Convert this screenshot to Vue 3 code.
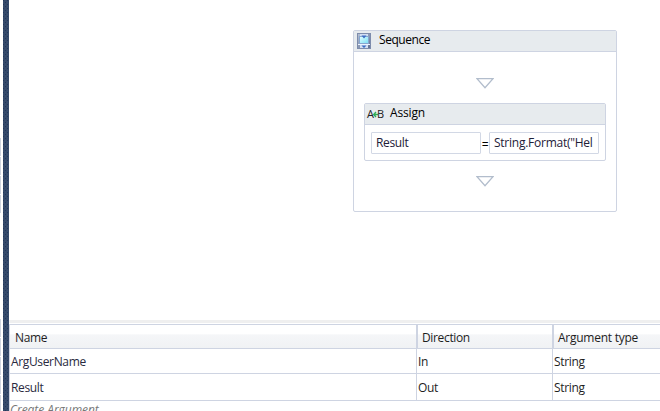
<script setup>
const rows = [
  { name: 'ArgUserName', direction: 'In', type: 'String' },
  { name: 'Result', direction: 'Out', type: 'String' },
]
</script>

<template>
  <div class="designer">
    <aside class="edge">
      <div class="tabs"><i v-for="n in 4" :key="n"></i></div>
      <div class="tabs lower"><i v-for="n in 5" :key="n"></i></div>
    </aside>
    <div class="splitter">
      <svg width="6" height="411">
        <defs>
          <pattern id="dots" width="4" height="4" patternUnits="userSpaceOnUse">
            <rect x="0" y="0" width="1" height="1" fill="#22375a" />
            <rect x="2" y="2" width="1" height="1" fill="#22375a" />
          </pattern>
        </defs>
        <rect width="6" height="411" fill="url(#dots)" />
      </svg>
    </div>
    <main class="main">
      <section class="canvas">
        <div class="sequence">
          <header class="head">
            <svg class="seq-icon" width="14" height="16" viewBox="0 0 14 16">
              <defs>
                <linearGradient id="frame" x2="1" y2="1">
                  <stop offset="0" stop-color="#b9c5d8" />
                  <stop offset="1" stop-color="#5c6b8e" />
                </linearGradient>
                <linearGradient id="pane" x2="1" y2="1">
                  <stop offset="0" stop-color="#e4ffff" />
                  <stop offset="1" stop-color="#78def4" />
                </linearGradient>
              </defs>
              <rect x=".5" y=".5" width="13" height="15" fill="url(#frame)" stroke="#7d8cac" />
              <path d="M3 1h8v14H3z" fill="#d3dff2" />
              <rect x="2.5" y="3.5" width="9" height="7" fill="url(#pane)" stroke="#86a6cf" />
              <path d="M4.500 2.500h5L7 5.500zM4.500 12.500h5l-2.500 2.500z" fill="#3a6cc4" />
              <path d="M1 11.500h12" stroke="#edf4ff" />
            </svg>
            <span class="seq-title">Sequence</span>
          </header>
          <div class="body">
            <svg class="arrow" width="18" height="11"><path d="M1 .7h16L9 9.700z" fill="#fff" stroke="#b2bdcc" stroke-width="1.3" /></svg>
            <div class="assign">
              <header class="head">
                <span class="ab"><span>A</span><svg width="5" height="7"><path d="M5 3.500H1M3 1L.7 3.500 3 6" fill="none" stroke="#2fae55" stroke-width="1.3" /></svg><span>B</span></span>
                <span class="assign-title">Assign</span>
              </header>
              <div class="expression">
                <div class="field">Result</div>
                <span class="equals">=</span>
                <div class="field value">String.Format("Hel</div>
              </div>
            </div>
            <svg class="arrow" width="18" height="11"><path d="M1 .7h16L9 9.700z" fill="#fff" stroke="#b2bdcc" stroke-width="1.3" /></svg>
          </div>
        </div>
      </section>
      <div class="rule"></div>
      <section class="table">
        <div class="row th"><span>Name</span><span>Direction</span><span class="type-head">Argument type</span></div>
        <div v-for="(r, i) in rows" :key="r.name" class="row" :class="{ tall: i === 1 }">
          <span class="name">{{ r.name }}</span><span>{{ r.direction }}</span><span>{{ r.type }}</span>
        </div>
        <div class="create">Create Argument</div>
      </section>
    </main>
  </div>
</template>

<style>
body { margin: 0; overflow: hidden; }
</style>

<style scoped>
* { box-sizing: border-box; }
.designer { display: flex; width: 660px; height: 411px; overflow: hidden; background: #fff; color: #1e1e1e; font: 12px/16px "Open Sans", "Noto Sans", sans-serif; letter-spacing: -.35px; }
svg { display: block; flex: none; }
.edge { width: 3px; padding-top: 138px; }
.tabs { display: flex; flex-direction: column; gap: 1px; width: 1px; }
.tabs i { height: 18px; background: #ced4df; }
.lower { margin-top: 106px; }
.splitter { width: 6px; background: #354a6b; }
.main { width: 651px; display: flex; flex-direction: column; }
.canvas { height: 320px; padding: 30px 0 0 344px; }
.sequence { width: 264px; height: 182px; border: 1px solid #ced4e2; border-radius: 2px; }
.head { display: flex; height: 21px; background: #e7ebee; border-bottom: 1px solid #ced4e2; color: #000; }
.seq-icon { margin: 2px 0 0 3px; }
.seq-title { margin: 1px 0 0 8px; letter-spacing: -.45px; }
.body { display: flex; flex-direction: column; align-items: center; padding-top: 26px; }
.assign { width: 242px; height: 58px; margin: 14px 0 15px; border: 1px solid #ced4e2; border-radius: 2px; }
.ab { display: flex; align-items: center; width: 17px; height: 14px; margin: 3px 0 0 2px; font: 11px/14px "Open Sans", sans-serif; letter-spacing: 0; color: #222; }
.ab svg { margin: 0 -1px; }
.assign-title { margin: 1px 0 0 6px; letter-spacing: -.15px; }
.expression { display: flex; padding: 7px 6px; }
.field { width: 110px; height: 22px; border: 1px solid #d2d8e5; border-radius: 1px; padding: 2px 0 0 4px; color: #1e2038; white-space: nowrap; overflow: hidden; }
.value { letter-spacing: -.25px; }
.equals { width: 8px; padding-top: 5px; text-align: center; color: #000; }
.rule { height: 3px; background: #efefef; }
.table { height: 88px; padding-top: 1px; }
.row { display: grid; grid-template-columns: 407px 136px 108px; height: 25px; border-bottom: 1px solid #ced4e2; }
.row span { border-left: 1px solid #ced4e2; padding: 5px 0 0 1px; white-space: nowrap; }
.row .name { color: #2a2a40; }
.th { border-top: 1px solid #ced4e2; background: linear-gradient(#fff 0 40%, #f5f6f8 42%, #f0f2f4); }
.row.th span { padding: 5px 0 0 5px; }
.row.th span + span { border-left-width: 2px; padding-left: 4px; }
.th .type-head { letter-spacing: -.25px; }
.tall { height: 27px; }
.row.tall span { padding-top: 6px; }
.create { border-left: 1px solid #ced4e2; height: 20px; padding: 1px 0 0; color: #777; font-style: italic; letter-spacing: -.05px; }
</style>
